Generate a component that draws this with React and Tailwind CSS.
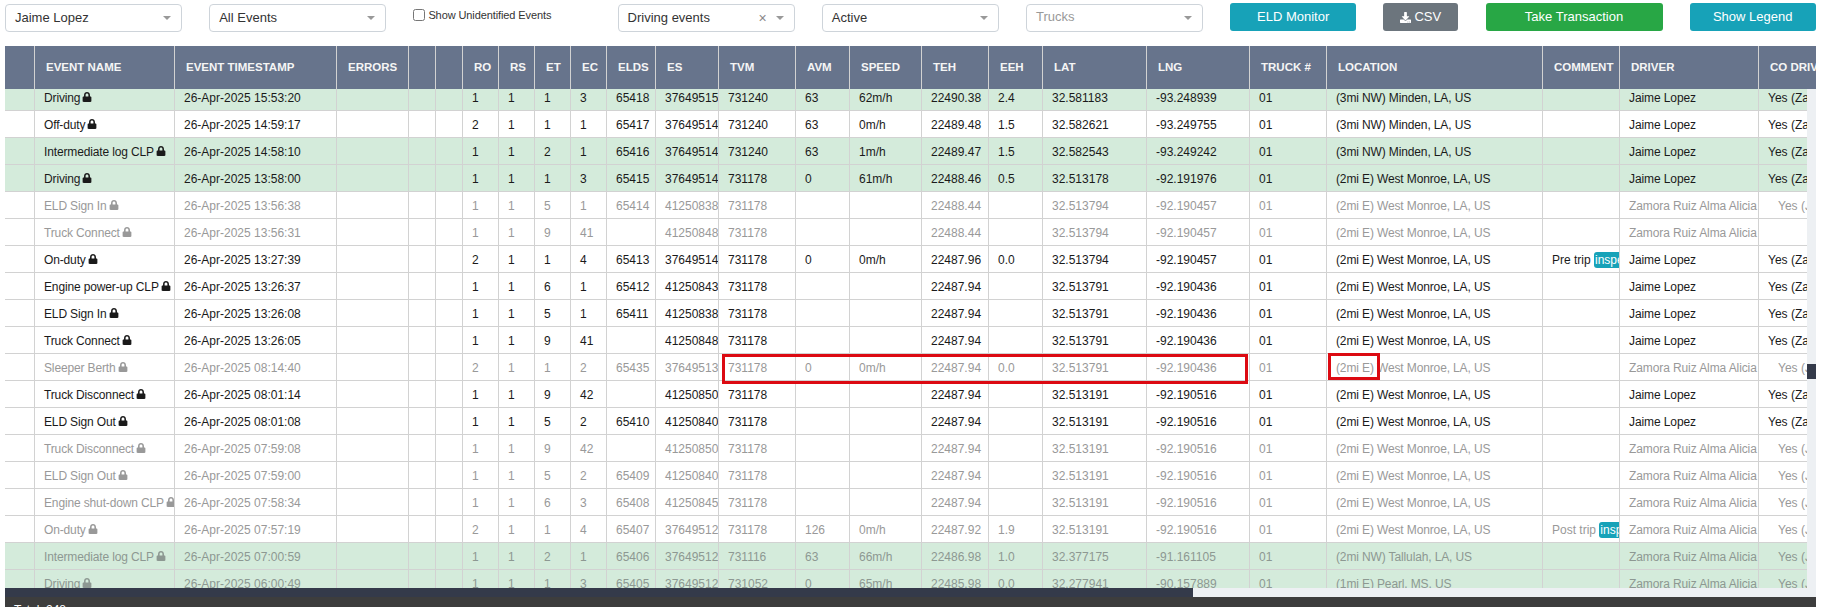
import React from "react";
import { FaLock, FaDownload } from "react-icons/fa";

const colClasses = [
  "w-[30px]", "w-[140px]", "w-[162px]", "w-[72px]", "w-[27px]", "w-[27px]", "w-[36px]", "w-[36px]",
  "w-[36px]", "w-[36px]", "w-[49px]", "w-[63px]", "w-[77px]", "w-[54px]", "w-[72px]", "w-[67px]",
  "w-[54px]", "w-[104px]", "w-[103px]", "w-[77px]", "w-[216px]", "w-[77px]", "w-[139px]", "w-[120px]",
];

const headers = [
  "", "EVENT NAME", "EVENT TIMESTAMP", "ERRORS", "", "", "RO", "RS", "ET", "EC", "ELDS", "ES", "TVM", "AVM",
  "SPEED", "TEH", "EEH", "LAT", "LNG", "TRUCK #", "LOCATION", "COMMENT", "DRIVER", "CO DRIVER",
];

const MINDEN = "(3mi NW) Minden, LA, US";
const MONROE = "(2mi E) West Monroe, LA, US";

// tone: g = green row, m = muted row
const rows = [
  { g: 1, n: "Driving", t: "15:53:20", c: [1, 1, 1, 3], d: ["65418", "37649515", "731240", "63", "62m/h", "22490.38", "2.4", "32.581183", "-93.248939"], loc: MINDEN },
  { n: "Off-duty", t: "14:59:17", c: [2, 1, 1, 1], d: ["65417", "37649514", "731240", "63", "0m/h", "22489.48", "1.5", "32.582621", "-93.249755"], loc: MINDEN },
  { g: 1, n: "Intermediate log CLP", t: "14:58:10", c: [1, 1, 2, 1], d: ["65416", "37649514", "731240", "63", "1m/h", "22489.47", "1.5", "32.582543", "-93.249242"], loc: MINDEN },
  { g: 1, n: "Driving", t: "13:58:00", c: [1, 1, 1, 3], d: ["65415", "37649514", "731178", "0", "61m/h", "22488.46", "0.5", "32.513178", "-92.191976"], loc: MONROE },
  { m: 1, n: "ELD Sign In", t: "13:56:38", c: [1, 1, 5, 1], d: ["65414", "41250838", "731178", "", "", "22488.44", "", "32.513794", "-92.190457"], loc: MONROE },
  { m: 1, noCo: 1, n: "Truck Connect", t: "13:56:31", c: [1, 1, 9, 41], d: ["", "41250848", "731178", "", "", "22488.44", "", "32.513794", "-92.190457"], loc: MONROE },
  { n: "On-duty", t: "13:27:39", c: [2, 1, 1, 4], d: ["65413", "37649514", "731178", "0", "0m/h", "22487.96", "0.0", "32.513794", "-92.190457"], loc: MONROE, note: "Pre trip" },
  { n: "Engine power-up CLP", t: "13:26:37", c: [1, 1, 6, 1], d: ["65412", "41250843", "731178", "", "", "22487.94", "", "32.513791", "-92.190436"], loc: MONROE },
  { n: "ELD Sign In", t: "13:26:08", c: [1, 1, 5, 1], d: ["65411", "41250838", "731178", "", "", "22487.94", "", "32.513791", "-92.190436"], loc: MONROE },
  { n: "Truck Connect", t: "13:26:05", c: [1, 1, 9, 41], d: ["", "41250848", "731178", "", "", "22487.94", "", "32.513791", "-92.190436"], loc: MONROE },
  { m: 1, n: "Sleeper Berth", t: "08:14:40", c: [2, 1, 1, 2], d: ["65435", "37649513", "731178", "0", "0m/h", "22487.94", "0.0", "32.513791", "-92.190436"], loc: MONROE },
  { n: "Truck Disconnect", t: "08:01:14", c: [1, 1, 9, 42], d: ["", "41250850", "731178", "", "", "22487.94", "", "32.513191", "-92.190516"], loc: MONROE },
  { n: "ELD Sign Out", t: "08:01:08", c: [1, 1, 5, 2], d: ["65410", "41250840", "731178", "", "", "22487.94", "", "32.513191", "-92.190516"], loc: MONROE },
  { m: 1, n: "Truck Disconnect", t: "07:59:08", c: [1, 1, 9, 42], d: ["", "41250850", "731178", "", "", "22487.94", "", "32.513191", "-92.190516"], loc: MONROE },
  { m: 1, n: "ELD Sign Out", t: "07:59:00", c: [1, 1, 5, 2], d: ["65409", "41250840", "731178", "", "", "22487.94", "", "32.513191", "-92.190516"], loc: MONROE },
  { m: 1, n: "Engine shut-down CLP", t: "07:58:34", c: [1, 1, 6, 3], d: ["65408", "41250845", "731178", "", "", "22487.94", "", "32.513191", "-92.190516"], loc: MONROE },
  { m: 1, n: "On-duty", t: "07:57:19", c: [2, 1, 1, 4], d: ["65407", "37649512", "731178", "126", "0m/h", "22487.92", "1.9", "32.513191", "-92.190516"], loc: MONROE, note: "Post trip" },
  { m: 1, g: 1, n: "Intermediate log CLP", t: "07:00:59", c: [1, 1, 2, 1], d: ["65406", "37649512", "731116", "63", "66m/h", "22486.98", "1.0", "32.377175", "-91.161105"], loc: "(2mi NW) Tallulah, LA, US" },
  { m: 1, g: 1, n: "Driving", t: "06:00:49", c: [1, 1, 1, 3], d: ["65405", "37649512", "731052", "0", "65m/h", "22485.98", "0.0", "32.277941", "-90.157889"], loc: "(1mi E) Pearl, MS, US" },
];

const Cols = () => (
  <colgroup>
    {colClasses.map((c, i) => (
      <col key={i} className={c} />
    ))}
  </colgroup>
);

const Select = ({ value, placeholder, clear }) => (
  <div className="w-[177px] h-[28px] mt-px shrink-0 flex items-center pl-[9px] pr-[10px] bg-white border border-[#ced4da] rounded text-[13px] text-[#333]">
    {value ? (
      <span>{value}</span>
    ) : (
      <span className="text-[#999] -mt-[3px]">{placeholder}</span>
    )}
    {clear && <span className="ml-auto mr-[9px] text-[#888] text-[14px] leading-none">×</span>}
    <span
      className={`${clear ? "" : "ml-auto"} w-0 h-0 border-x-4 border-x-transparent border-t-[4px] border-t-[#999]`}
    />
  </div>
);

const Btn = ({ className, children }) => (
  <button className={`h-[28px] shrink-0 rounded-[3px] text-white text-[13px] flex items-center justify-center gap-[3px] ${className}`}>
    {children}
  </button>
);

const Cell = ({ children, className = "" }) => (
  <td className={`h-[27px] p-0 pt-[2px] pl-[9px] border-r border-b border-[#d2d2d2] whitespace-nowrap overflow-hidden ${className}`}>
    {children}
  </td>
);

const Row = ({ row }) => {
  const color = row.m ? (row.g ? "text-[#8d9892]" : "text-[#999]") : "text-[#1a1a1a]";
  return (
    <tr className={`${row.g ? "bg-[#d4ebdb]" : "bg-white"} ${color}`}>
      <Cell />
      <Cell className="tracking-[-0.14px]">
        {row.n}
        <FaLock className="inline-block ml-[2px] -mt-[3px] text-[10px]" />
      </Cell>
      <Cell>26-Apr-2025 {row.t}</Cell>
      <Cell />
      <Cell />
      <Cell />
      {row.c.map((v, i) => (
        <Cell key={i}>{v}</Cell>
      ))}
      {row.d.map((v, i) => (
        <Cell key={i}>{v}</Cell>
      ))}
      <Cell>01</Cell>
      <Cell className="tracking-[-0.13px]">{row.loc}</Cell>
      <Cell>
        {row.note && (
          <>
            {row.note}{" "}
            <span className="bg-[#17a2b8] text-white rounded-[3px] px-px py-[1px]">inspection</span>
          </>
        )}
      </Cell>
      <Cell className="tracking-[-0.1px]">{row.m ? "Zamora Ruiz Alma Alicia" : "Jaime Lopez"}</Cell>
      <Cell className={row.m ? "pl-[19px]" : ""}>
        {row.noCo ? "" : row.m ? "Yes (Jaime Lopez)" : "Yes (Zamora Ruiz)"}
      </Cell>
    </tr>
  );
};

export default function App() {
  return (
    <div className="relative w-full h-[607px] overflow-hidden bg-white font-['Liberation_Sans',Arial,sans-serif] text-[12px]">
      {/* FILTERS */}
      <div className="h-[46px] pl-[5px] pt-[3px] flex items-start gap-[27.2px]">
        <Select value="Jaime Lopez" />
        <Select value="All Events" />
        <label className="w-[177px] shrink-0 flex items-center gap-[3px] mt-[4px] text-[11px] tracking-[-0.1px] text-[#333]">
          <input type="checkbox" readOnly className="w-[12px] h-[12px] m-0" />
          Show Unidentified Events
        </label>
        <Select value="Driving events" clear />
        <Select value="Active" />
        <Select placeholder="Trucks" />
        <Btn className="w-[126px] bg-[#17a2b8]">ELD Monitor</Btn>
        <Btn className="w-[75px] bg-[#6c757d]">
          <FaDownload className="text-[11px]" /> CSV
        </Btn>
        <Btn className="w-[177px] bg-[#28a745]">Take Transaction</Btn>
        <Btn className="w-[126px] bg-[#17a2b8]">Show Legend</Btn>
      </div>

      {/* TABLE */}
      <div className="ml-[5px] w-[1811px]">
        <div className="overflow-hidden bg-[#67748c]">
          <table className="table-fixed border-separate border-spacing-0 w-[1874px]">
            <Cols />
            <thead>
              <tr>
                {headers.map((h, i) => (
                  <th
                    key={i}
                    className="h-[43px] p-0 pl-[11px] text-left font-semibold text-[11.5px] text-[#f5f5f5] whitespace-nowrap overflow-hidden border-r border-[#d2d2d2]"
                  >
                    {h}
                  </th>
                ))}
              </tr>
            </thead>
          </table>
        </div>
        <div className="flex h-[499px]">
          <div className="w-[1802px] overflow-hidden">
            <table className="table-fixed border-separate border-spacing-0 w-[1874px] -mt-[5px]">
              <Cols />
              <tbody>
                {rows.map((r, i) => (
                  <Row key={i} row={r} />
                ))}
              </tbody>
            </table>
          </div>
          <div className="w-[9px] bg-[#edf0f3] pt-[275px]">
            <div className="h-[15px] bg-[#343a4a]" />
          </div>
        </div>
        <div className="h-[9px] bg-[#edf0f3]">
          <div className="h-full w-[1188px] bg-[#343a4a]" />
        </div>
        <div className="h-[10px] overflow-hidden bg-[#3d3d3d] pl-[9px] pt-[6px] text-[12px] leading-[14px] text-white">
          Total: 248
        </div>
      </div>

      {/* highlight boxes drawn over the table */}
      <div className="absolute left-[722px] top-[354px] w-[526px] h-[30px] border-[3px] border-[#dc0a12]" />
      <div className="absolute left-[1328px] top-[353px] w-[52px] h-[27px] border-[3px] border-[#dc0a12]" />
    </div>
  );
}
